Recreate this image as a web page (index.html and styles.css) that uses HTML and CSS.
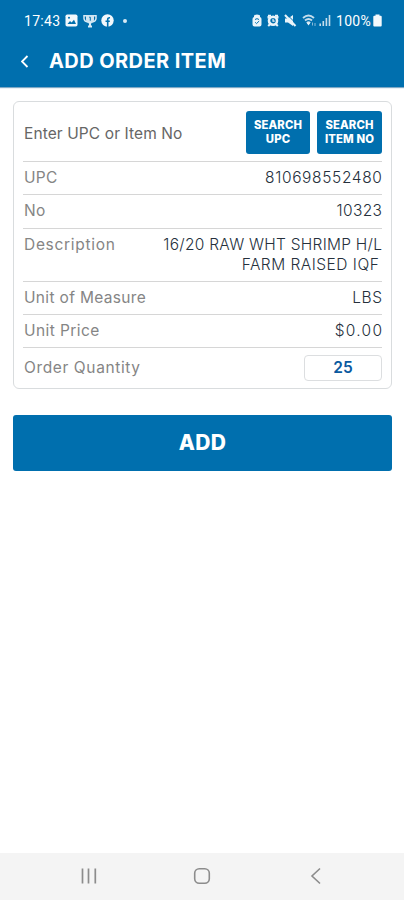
FILE: index.html
```
<!DOCTYPE html>
<html lang="en">
<head>
<meta charset="utf-8">
<title>Add Order Item</title>
<link rel="stylesheet" href="styles.css">
</head>
<body>
<div class="screen">
  <header class="top">
    <div class="status">
      <div class="status-left">
        <span class="clock">17:43</span>
        <svg class="ic-image" width="13" height="13" viewBox="0 0 13 13"><rect x=".5" y=".5" width="12" height="12" rx="1.8" fill="#f2f8fc"/><path d="M2.5 10 5 7l1.600 1.500L9 5.800l2 4.200z" fill="#0070ae"/><circle cx="4" cy="3.800" r="1" fill="#0070ae"/></svg>
        <svg class="ic-trophy" width="14" height="14" viewBox="0 0 14 14"><path d="M3 1h8v4.500A4 4 0 0 1 7 9.500a4 4 0 0 1-4-4z" fill="#cfe4f1"/><path d="M3.300 1.700H1v2.800Q1.300 7.300 4 7.700M10.700 1.700H13v2.800Q12.700 7.300 10 7.700" fill="none" stroke="#d8eaf5" stroke-width="1.500"/><path d="M7 8v4.500M5 12.500h4" stroke="#d8eaf5" stroke-width="2"/><path d="M6.200 3.200H7.300v3.500" fill="none" stroke="#0070ae" stroke-width="1"/></svg>
        <svg class="ic-fb" width="13" height="13" viewBox="0 0 13 13"><circle cx="6.500" cy="6.500" r="6.200" fill="#f2f8fc"/><path d="M6.700 13V5.500Q6.700 3.500 9 3.700M4.500 7.300h4.300" fill="none" stroke="#0070ae" stroke-width="1.600"/></svg>
        <i class="dot"></i>
      </div>
      <div class="status-right">
        <svg width="10" height="13" viewBox="0 0 10 13"><path d="M2 3V2Q2 .5 5 .5T8 2v1Q9.500 3.500 9.500 5v5.500q0 2-2 2h-5q-2 0-2-2V5q0-1.500 1.500-2z" fill="#eaf4fa"/><path d="M3 5.500Q5 3.800 7 5.500M3.200 8.300l1.300 1.300L7.200 7" fill="none" stroke="#0070ae" stroke-width="1"/></svg>
        <svg class="ic-alarm" width="12" height="13" viewBox="0 0 12 13"><path d="M1 1.700h3M8 1.700h3M1.200 12l2-2M10.800 12l-2-2M1.500 2v2.500M10.500 2v2.500" stroke="#eaf4fa" stroke-width="2"/><circle cx="6" cy="6.700" r="4" fill="none" stroke="#eaf4fa" stroke-width="2.600"/><path d="M6 4.700v2.500h1.700" fill="none" stroke="#eaf4fa" stroke-width="1.200"/></svg>
        <svg class="ic-mute" width="13" height="13" viewBox="0 0 13 13"><path d="M1 4.500h3L9 1v11L4 8.500H1z" fill="#eaf4fa"/><path d="m2.500 0 10.500 10.500" stroke="#0070ae" stroke-width="1"/><path d="m1 1 10.500 11" stroke="#eaf4fa" stroke-width="2"/></svg>
        <svg class="ic-wifi" width="15" height="13" viewBox="0 0 15 13"><path d="M1 4Q6.500-.8 12 4M3 6.500Q6.500 3.500 10 6.500M5 9Q6.500 7.500 8 9" fill="none" stroke="#c4ddec" stroke-width="1.900"/><path d="m4.500 8.500 2 3L8.500 8.500z" fill="#eaf4fa"/><path d="M10.500 8.500v3M13 12V9" stroke="#8abbd9" stroke-width="1"/></svg>
        <svg class="ic-signal" width="12" height="13" viewBox="0 0 12 13"><path d="M1.200 12V9.500M4.300 12V7M7.400 12V4M10.500 12V1" stroke="#c4ddec" stroke-width="1.600"/></svg>
        <span class="percent">100%</span>
        <svg class="ic-battery" width="9" height="13" viewBox="0 0 9 13"><path d="M2.500.5h4V1.700h1.200q1 0 1 1v8.800q0 1-1 1h-6.400q-1 0-1-1V2.700q0-1 1-1H2.500z" fill="#f4f9fc"/></svg>
      </div>
    </div>
    <div class="titlebar">
      <svg width="8" height="13" viewBox="0 0 8 13"><path d="M6.500 1 1 6.500 6.500 12" fill="none" stroke="#fff" stroke-width="1.800"/></svg>
      <h1>ADD ORDER ITEM</h1>
    </div>
  </header>
  <main>
    <section class="card">
      <div class="row search"><span class="prompt">Enter UPC or Item No</span><div class="buttons"><button>SEARCH<br>UPC</button><button class="wide">SEARCH<br>ITEM NO</button></div></div>
      <div class="row"><span class="l-upc">UPC</span><b class="v-upc">810698552480</b></div>
      <div class="row"><span class="l-no">No</span><b class="v-no">10323</b></div>
      <div class="row desc"><span class="l-desc">Description</span><b class="v-desc">16/20 RAW WHT SHRIMP H/L<br><em>FARM RAISED IQF</em></b></div>
      <div class="row"><span class="l-uom">Unit of Measure</span><b class="v-lbs">LBS</b></div>
      <div class="row"><span class="l-price">Unit Price</span><b class="v-price">$0.00</b></div>
      <div class="row qty"><span class="l-qty">Order Quantity</span><div class="field">25</div></div>
    </section>
    <button class="add">ADD</button>
  </main>
  <nav>
    <svg width="18" height="18" viewBox="0 0 18 18"><path d="M2.500 1.500v15M8.500 1.500v15M15.300 1.500v15" stroke="#8c8c8c" stroke-width="1.700"/></svg>
    <svg width="18" height="18" viewBox="0 0 18 18"><rect x="1.700" y="1.700" width="14.600" height="14.600" rx="4.500" fill="none" stroke="#8c8c8c" stroke-width="1.600"/></svg>
    <svg width="18" height="18" viewBox="0 0 18 18"><path d="M13 1.500 5 9l8 7.500" fill="none" stroke="#8c8c8c" stroke-width="1.600"/></svg>
  </nav>
</div>
</body>
</html>
```
FILE: styles.css
```
* { box-sizing: border-box; }
body { margin: 0; background: #fff; font-family: Inter, "Liberation Sans", sans-serif; }
.screen { height: 900px; display: flex; flex-direction: column; }
.top { height: 87px; background: #006fae; color: #fff; box-shadow: 0 1px 1px #7fa9c6; padding: 0 21px; }
.status { height: 41px; display: flex; justify-content: space-between; align-items: center; padding-left: 3px; font-family: Roboto, sans-serif; font-size: 14px; }
.status-left, .status-right { display: flex; align-items: center; }
.clock { width: 36px; margin-right: 5px; letter-spacing: .3px; white-space: nowrap; }
.ic-trophy { margin-left: 5px; }
.ic-fb { margin-left: 4px; }
.dot { width: 4px; height: 4px; border-radius: 50%; background: #d8eaf5; margin-left: 9px; }
.ic-alarm { margin-left: 5px; }
.ic-mute { margin-left: 5px; }
.ic-wifi { margin-left: 5px; }
.ic-signal { margin-left: 2px; }
.percent { margin-left: 5px; width: 36px; white-space: nowrap; letter-spacing: .3px; }
.ic-battery { margin-left: 1px; margin-right: 1px; }
.titlebar { height: 40px; display: flex; align-items: center; }
h1 { margin: 0 0 0 20px; font-size: 20px; line-height: 24px; font-weight: 700; letter-spacing: .42px; white-space: nowrap; }
main { flex: 1; padding: 14px 12px 0 13px; }
.card { height: 288px; border: 1px solid #d9dcde; border-radius: 6px; padding: 0 9px 0 10px; }
.row { height: 33.3px; border-bottom: 1px solid #d6d6d6; display: flex; justify-content: space-between; align-items: center; font-size: 15.5px; line-height: 20px; color: #858585; white-space: nowrap; margin-left: -1px; }
.row > span { padding-left: 1px; }
.row b { font-weight: 300; color: #25303c; text-align: right; }
.row em { font-style: normal; margin-right: 3px; letter-spacing: .5px; }
.row.search { height: 60px; padding-top: 1px; }
.search .prompt { color: #666; padding-top: 3px; letter-spacing: .1px; }
.l-upc, .l-no { letter-spacing: .3px; }
.l-desc { letter-spacing: .7px; }
.l-uom { letter-spacing: .33px; }
.l-price { letter-spacing: .42px; }
.l-qty { letter-spacing: .62px; }
.v-upc { letter-spacing: .65px; margin-right: -.6px; }
.v-no { letter-spacing: .4px; margin-right: -.4px; }
.v-desc { letter-spacing: .27px; margin-right: -.3px; margin-top: -1px; }
.v-lbs { letter-spacing: .6px; margin-right: -.6px; }
.v-price { letter-spacing: 1.3px; margin-right: -1.3px; }
.buttons { display: flex; gap: 7px; }
.buttons button { width: 64px; height: 43px; padding: 0; border: 0; border-radius: 3px; background: #006fae; color: #fff; font: 800 11.3px/14.5px Inter, sans-serif; letter-spacing: .1px; }
.buttons .wide { width: 65px; }
.row.desc { height: 53px; align-items: flex-start; padding-top: 7px; }
.l-desc { margin-top: -1px; }
.row.qty { height: 39px; border: 0; }
.field { width: 78px; height: 26px; border: 1px solid #dcdee0; border-radius: 4px; color: #0a59a0; font-weight: 600; text-align: center; line-height: 24px; }
.add { display: block; width: 100%; height: 56px; margin-top: 26px; border: 0; border-radius: 3px; background: #006fae; color: #fff; font: 800 21px/24px Inter, sans-serif; letter-spacing: .4px; }
nav { height: 47px; background: #f4f4f4; display: flex; justify-content: space-between; align-items: center; padding: 0 79px 2px 80px; }
nav svg:nth-child(2) { margin-right: 2px; }
```
